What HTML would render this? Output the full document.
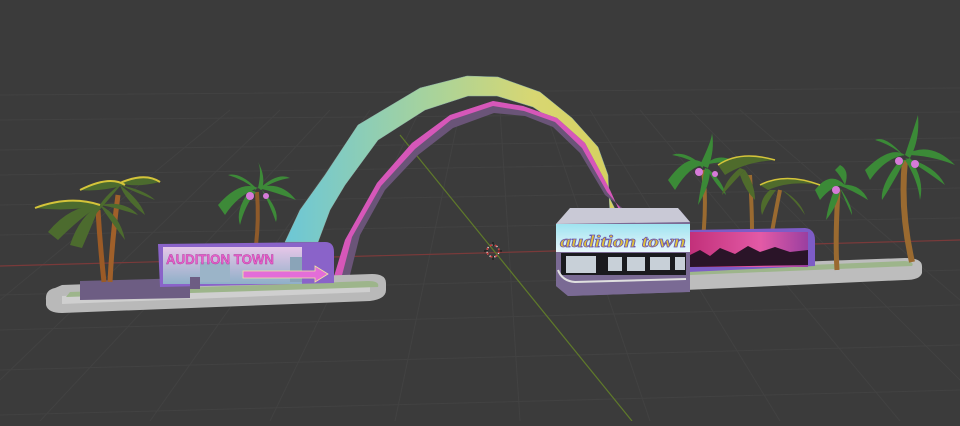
<!DOCTYPE html>
<html><head><style>html,body{margin:0;padding:0;background:#3b3b3b;overflow:hidden}</style></head>
<body>
<svg width="960" height="421" viewBox="0 0 960 421" xmlns="http://www.w3.org/2000/svg" font-family="Liberation Sans, sans-serif">
<defs>
<linearGradient id="arc" x1="0" y1="0" x2="1" y2="0">
<stop offset="0" stop-color="#6cc7d6"/><stop offset="0.45" stop-color="#a9d39a"/><stop offset="0.75" stop-color="#d8d772"/><stop offset="1" stop-color="#d6cf5e"/></linearGradient>
<linearGradient id="sky" x1="0" y1="0" x2="0" y2="1"><stop offset="0" stop-color="#e6c6e8"/><stop offset="1" stop-color="#8fb0c8"/></linearGradient>
<linearGradient id="party" x1="0" y1="0" x2="1" y2="0"><stop offset="0" stop-color="#c2307a"/><stop offset="0.6" stop-color="#e35aa6"/><stop offset="1" stop-color="#9a3fa0"/></linearGradient>
<linearGradient id="band" x1="0" y1="0" x2="0" y2="1"><stop offset="0" stop-color="#9fe3f0"/><stop offset="1" stop-color="#e8f6fb"/></linearGradient>
</defs>
<rect width="960" height="421" fill="#3b3b3b"/>
<g stroke="#424242" stroke-width="1" fill="none">
<path d="M0 150 L960 138 M0 175 L960 160 M0 205 L960 188 M0 235 L960 218 M0 295 L960 270 M0 330 L960 305 M0 370 L960 345 M0 415 L960 390 M0 120 L960 112 M0 95 L960 88"/>
<path d="M40 421 L330 110 M150 421 L370 110 M270 421 L420 110 M395 421 L460 110 M520 421 L500 110 M650 421 L545 110 M780 421 L590 110 M900 421 L640 110 M960 380 L690 110 M960 300 L740 110 M0 380 L280 110 M0 300 L230 110"/>
</g>
<line x1="0" y1="266" x2="960" y2="240" stroke="#7a3a3a" stroke-width="1.2"/>
<line x1="400" y1="135" x2="632" y2="421" stroke="#5f7a2a" stroke-width="1.2"/>
<polygon fill="url(#arc)" stroke="#8fb2a8" stroke-width="0.5" points="285,242 300,210 325,175 358,125 420,88 467,76 498,77 540,92 572,118 598,147 608,175 610,215 617,213 603,185 588,150 565,128 533,107 497,96 468,96 425,110 378,140 345,185 330,210 318,242"/>
<polygon fill="#6a5478" points="332,283 345,240 377,183 412,143 450,115 493,101 523,106 557,118 585,143 610,190 620,212 625,210 605,195 580,153 553,127 525,116 494,113 453,128 418,155 385,190 360,235 348,283"/>
<polygon fill="#d657b9" points="332,283 345,240 377,183 412,143 450,115 493,101 523,106 557,118 585,143 610,190 620,212 623,211 607,192 582,148 555,122 524,111 493,106 451,120 415,149 381,186 352,237 340,283"/>
<circle cx="493" cy="251" r="6" fill="none" stroke="#e8e8e8" stroke-width="1.5" stroke-dasharray="3 2"/>
<circle cx="493" cy="251" r="6" fill="none" stroke="#c33" stroke-width="1.5" stroke-dasharray="2 3"/>
<path d="M493 242v4M493 256v4M484 251h4M498 251h4" stroke="#111"/>
<path d="M55 288 Q45 290 46 300 L46 305 Q48 313 62 313 L370 301 Q386 299 386 290 L386 283 Q386 274 372 274 L62 285 Z" fill="#b9b9b9"/>
<path d="M62 296 L370 284 L370 292 L62 304Z" fill="#cfcfcf"/>
<path d="M70 292 L368 281 Q380 281 378 287 L66 297 Z" fill="#9db58b"/>
<path d="M80 281 L190 278 L190 298 L80 300 Z" fill="#6d5d83"/>
<path d="M98 210 Q100 245 104 282" stroke="#9a5a26" stroke-width="5" fill="none"/>
<path d="M118 195 Q112 240 110 282" stroke="#a0602a" stroke-width="5" fill="none"/>
<path d="M257 192 Q259 220 256 245" stroke="#8e5a2a" stroke-width="4" fill="none"/>
<g fill="#4c6b2e">
<path d="M35 208 Q70 195 100 205 Q70 212 35 208Z"/><path d="M48 232 Q70 205 100 205 Q80 218 58 240Z"/><path d="M70 245 Q80 215 100 205 Q92 225 82 248Z"/><path d="M100 205 Q120 215 125 240 Q110 220 100 205Z"/><path d="M100 205 Q125 200 138 215 Q118 208 100 205Z"/>
<path d="M80 190 Q110 175 125 185 Q100 192 80 190Z"/><path d="M120 183 Q145 172 160 182 Q135 188 120 183Z"/><path d="M120 185 Q140 200 145 215 Q125 200 120 185Z"/><path d="M118 186 Q100 200 95 215 Q110 198 120 186Z"/><path d="M120 185 Q145 190 155 200 Q135 192 120 185Z"/>
</g>
<path d="M35 208 Q70 195 100 205" stroke="#d4c43a" stroke-width="2" fill="none"/>
<path d="M80 190 Q110 175 125 185 M120 183 Q145 172 160 182" stroke="#d4c43a" stroke-width="2" fill="none"/>
<g fill="#3d8a38">
<path d="M218 205 Q240 180 258 188 Q238 195 225 215Z"/><path d="M258 188 Q280 180 296 200 Q275 192 258 188Z"/><path d="M258 188 Q262 170 258 162 Q266 176 262 190Z"/><path d="M250 190 Q235 210 240 225 Q245 205 256 192Z"/><path d="M262 190 Q280 210 276 222 Q270 205 262 190Z"/><path d="M256 188 Q240 172 228 175 Q245 180 256 190Z"/><path d="M260 188 Q278 172 290 178 Q275 180 260 190Z"/>
</g>
<circle cx="250" cy="196" r="4" fill="#d67ad8"/><circle cx="266" cy="196" r="3" fill="#d67ad8"/>
<path d="M158 244 L325 242 Q334 242 334 252 L334 283 L160 287 Z" fill="#8a63c9"/>
<rect x="163" y="247" width="139" height="37" fill="url(#sky)"/>
<rect x="200" y="262" width="30" height="20" fill="#9bb4c8"/><rect x="290" y="257" width="12" height="25" fill="#8aa4b8"/>
<text x="166" y="264" font-size="14" font-weight="bold" fill="#e85fc9" stroke="#b03ca0" stroke-width="0.4" textLength="108" lengthAdjust="spacingAndGlyphs">AUDITION TOWN</text>
<polygon points="243,271 315,271 315,266 328,274 315,282 315,278 243,278" fill="#e36dd8" stroke="#f2e6a0" stroke-width="0.8"/>
<rect x="190" y="277" width="10" height="12" fill="#6d5d83"/>
<path d="M685 266 L905 258 Q922 258 922 266 L922 273 Q920 280 905 280 L685 290 Z" fill="#bdbdbd"/>
<path d="M690 270 L905 261 Q915 262 912 266 L690 275Z" fill="#9db58b"/>
<g stroke="#9a6a30" fill="none">
<path d="M703 170 Q708 210 700 262" stroke-width="4"/>
<path d="M750 175 Q752 210 752 230" stroke-width="4"/>
<path d="M780 190 Q775 215 772 232" stroke-width="4"/>
<path d="M838 190 Q835 240 837 270" stroke-width="5"/>
<path d="M905 160 Q900 210 912 262" stroke-width="6"/>
</g>
<g fill="#3b8a37">
<path d="M668 180 Q690 150 705 165 Q690 165 675 190Z"/><path d="M705 165 Q720 150 740 165 Q722 160 705 165Z"/><path d="M700 165 Q712 140 712 133 Q715 150 708 168Z"/><path d="M705 168 Q700 190 698 205 Q710 185 710 170Z"/><path d="M703 166 Q685 150 672 155 Q690 158 703 168Z"/><path d="M707 168 Q722 180 726 195 Q712 180 707 168Z"/>
<path d="M815 190 Q830 170 845 185 Q832 185 820 200Z"/><path d="M838 185 Q860 182 868 200 Q852 190 838 185Z"/><path d="M835 188 Q828 205 826 220 Q838 205 840 190Z"/><path d="M840 165 Q850 170 845 185 Q840 175 835 170Z"/><path d="M840 188 Q852 205 852 215 Q845 200 840 188Z"/>
<path d="M865 170 Q890 145 905 155 Q885 158 870 180Z"/><path d="M905 155 Q930 140 955 165 Q930 155 905 155Z"/><path d="M905 155 Q915 125 918 115 Q920 140 910 158Z"/><path d="M905 160 Q918 180 920 200 Q925 180 910 158Z"/><path d="M900 160 Q880 185 882 200 Q895 180 905 160Z"/><path d="M905 158 Q935 165 945 185 Q925 170 905 158Z"/><path d="M903 155 Q885 135 875 140 Q892 145 905 157Z"/>
</g>
<g fill="#4f6b2c">
<path d="M718 165 Q740 150 775 160 Q745 162 725 175Z"/><path d="M745 170 Q755 185 755 200 Q745 190 740 175Z"/><path d="M740 168 Q725 180 722 195 Q735 180 745 170Z"/>
<path d="M760 185 Q785 172 820 185 Q790 180 768 190Z"/><path d="M770 190 Q758 200 762 215 Q768 200 776 190Z"/><path d="M782 190 Q800 200 805 215 Q795 200 782 190Z"/>
</g>
<path d="M718 165 Q740 150 775 160 M760 185 Q785 172 820 185" stroke="#d4c43a" stroke-width="1.5" fill="none"/>
<circle cx="699" cy="172" r="4" fill="#d67ad8"/><circle cx="715" cy="174" r="3" fill="#d67ad8"/>
<circle cx="836" cy="190" r="4" fill="#d67ad8"/>
<circle cx="899" cy="161" r="4" fill="#d67ad8"/><circle cx="915" cy="164" r="4" fill="#d67ad8"/>
<path d="M688 230 L805 228 Q815 229 815 240 L815 266 L688 272 Z" fill="#7d5cc6"/>
<rect x="690" y="232" width="118" height="35" fill="url(#party)"/>
<path d="M690 267 L690 255 L700 250 L710 256 L720 248 L735 254 L748 246 L760 252 L775 247 L790 252 L808 250 L808 265 Z" fill="#2a1428"/>
<path d="M568 212 L680 210 L690 222 L690 292 L568 296 L556 286 L556 224 Z" fill="#7a6a94"/>
<path d="M570 208 L678 208 L690 222 L556 224 Z" fill="#c9c9d6"/>
<rect x="556" y="224" width="134" height="28" fill="url(#band)"/>
<text x="560" y="247" font-size="17" font-weight="bold" font-style="italic" font-family="Liberation Serif, serif" fill="#e0c23c" stroke="#6a55b0" stroke-width="0.7" textLength="126" lengthAdjust="spacingAndGlyphs">audition town</text>
<rect x="561" y="253" width="125" height="22" fill="#1a1a1e"/>
<g fill="#c8d0d8"><rect x="566" y="256" width="30" height="17"/><rect x="608" y="257" width="14" height="14"/><rect x="627" y="257" width="18" height="14"/><rect x="650" y="257" width="20" height="13"/><rect x="675" y="257" width="10" height="13"/></g>
<path d="M556 272 Q560 282 575 283 L686 280 L686 292 L568 296 L556 286Z" fill="#7a6a94"/>
<path d="M558 270 Q562 281 575 282 L686 279" stroke="#e0e0e0" stroke-width="2" fill="none"/>
</svg>
</body></html>
